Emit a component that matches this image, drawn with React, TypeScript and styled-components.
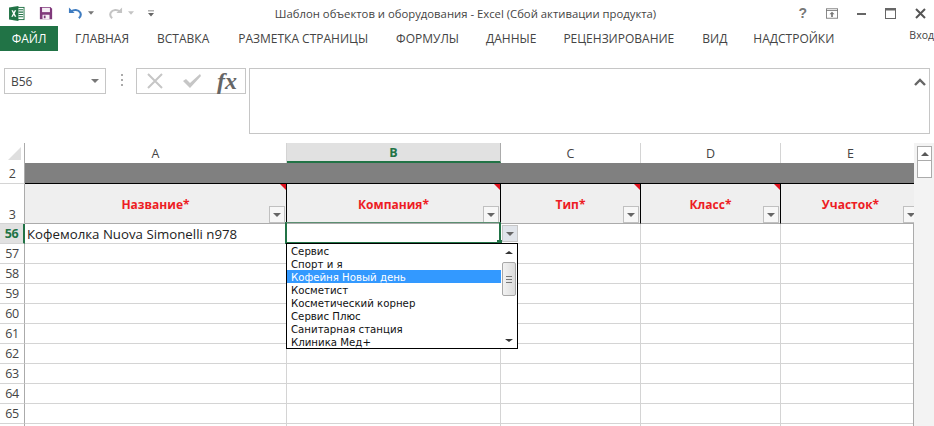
import React from 'react';
import styled, { createGlobalStyle } from 'styled-components';

const GlobalStyle = createGlobalStyle`
  html, body {
    margin: 0;
    padding: 0;
    background: #fff;
    overflow: hidden;
  }
  body {
    font-family: "Open Sans", "Liberation Sans", sans-serif;
    color: #444;
  }
`;

const Page = styled.div`
  width: 934px;
  height: 426px;
  overflow: hidden;
  display: flex;
  flex-direction: column;
`;

const TitleBar = styled.div`
  height: 26px;
  display: grid;
  grid-template-columns: 1fr auto 1fr;
  align-items: center;
`;

const QuickAccess = styled.div`
  display: flex;
  align-items: center;
  padding-left: 9px;
`;

const Glyph = styled.svg<{ $left?: number; $flip?: boolean }>`
  display: block;
  flex: none;
  margin-left: ${(p) => p.$left ?? 0}px;
  ${(p) => (p.$flip ? 'transform: scaleX(-1);' : '')}
`;

const Title = styled.div`
  font-size: 11.3px;
  color: #444;
  white-space: nowrap;
  margin-right: 3px;
`;

const WindowButtons = styled.div`
  display: flex;
  align-items: center;
  justify-content: flex-end;
  gap: 19px;
  padding-right: 8px;
`;

const Help = styled.span`
  font-family: "Liberation Sans", sans-serif;
  font-size: 14px;
  font-weight: 700;
  color: #777;
`;

const TabBar = styled.div`
  height: 25px;
  display: flex;
  align-items: stretch;
  font-size: 12px;
  position: relative;
`;

const FileTab = styled.div`
  width: 58px;
  background: #217346;
  color: #fff;
  display: flex;
  align-items: center;
  justify-content: center;
`;

const Tab = styled.div<{ $left: number }>`
  margin-left: ${(p) => p.$left}px;
  display: flex;
  align-items: center;
  white-space: nowrap;
  color: #444;
`;

const SignIn = styled.div`
  position: absolute;
  right: 0;
  top: 2px;
  font-size: 10.5px;
  color: #444;
`;

const FormulaBar = styled.div`
  margin-top: 17px;
  height: 66px;
  padding-left: 4px;
  display: flex;
  align-items: flex-start;
`;

const NameBox = styled.div`
  box-sizing: border-box;
  width: 102px;
  height: 26px;
  border: 1px solid #c6c6c6;
  display: flex;
  align-items: center;
  justify-content: space-between;
  padding: 0 6px 0 6px;
  font-size: 12px;
  color: #444;
`;

const Caret = styled.span`
  width: 0;
  height: 0;
  border-left: 4px solid transparent;
  border-right: 4px solid transparent;
  border-top: 4px solid #777;
`;

const Grip = styled.div`
  width: 2px;
  height: 14px;
  margin: 6px 13px 0 15px;
  background: repeating-linear-gradient(to bottom, #aaa 0 2px, transparent 2px 5px);
`;

const FxBox = styled.div`
  box-sizing: border-box;
  width: 110px;
  height: 26px;
  border: 1px solid #c6c6c6;
  display: flex;
  align-items: center;
  padding-left: 10px;
`;

const Fx = styled.span`
  font-family: "Liberation Serif", serif;
  font-style: italic;
  font-weight: 700;
  font-size: 24px;
  line-height: 22px;
  color: #666;
  margin-left: 15px;
`;

const FormulaInput = styled.div`
  box-sizing: border-box;
  position: relative;
  margin-left: 3px;
  width: 681px;
  height: 66px;
  border: 1px solid #c6c6c6;
  svg {
    position: absolute;
    top: 9px;
    right: 3px;
  }
`;

const SheetArea = styled.div`
  margin-top: 9px;
  flex: 1;
  display: flex;
  min-height: 0;
`;

const Viewport = styled.div`
  position: relative;
  box-sizing: border-box;
  width: 914px;
  height: 283px;
  overflow: hidden;
  &::after {
    content: '';
    position: absolute;
    top: 80px;
    bottom: 0;
    right: 0;
    width: 1px;
    background: #ababab;
  }
`;

const SheetGrid = styled.div`
  display: grid;
  grid-template-columns: 25px 262px 214px 140px 140px 140px;
  grid-template-rows: 20px 21px 40px repeat(11, 20px);
  width: 921px;
`;

const Corner = styled.div`
  border-right: 1px solid #ababab;
  position: relative;
  &::after {
    content: '';
    position: absolute;
    right: 3px;
    bottom: 3px;
    border-left: 13px solid transparent;
    border-bottom: 13px solid #dfdfdf;
  }
`;

const ColHead = styled.div<{ $active?: boolean }>`
  box-sizing: border-box;
  display: flex;
  align-items: center;
  justify-content: center;
  font-size: 12.5px;
  color: ${(p) => (p.$active ? '#217346' : '#444')};
  font-weight: ${(p) => (p.$active ? 700 : 400)};
  background: ${(p) => (p.$active ? '#e1e1e1' : '#fff')};
  border-right: 1px solid ${(p) => (p.$active ? '#ababab' : '#d4d4d4')};
  border-bottom: ${(p) => (p.$active ? '2px solid #217346' : 'none')};
`;

const RowHead = styled.div<{ $active?: boolean; $bottom?: boolean }>`
  box-sizing: border-box;
  display: flex;
  justify-content: center;
  align-items: ${(p) => (p.$bottom ? 'flex-end' : 'center')};
  font-size: 12.5px;
  letter-spacing: -0.5px;
  color: ${(p) => (p.$active ? '#217346' : '#444')};
  font-weight: ${(p) => (p.$active ? 700 : 400)};
  background: ${(p) => (p.$active ? '#e1e1e1' : '#fff')};
  border-right: ${(p) => (p.$active ? '2px solid #217346' : '1px solid #ababab')};
  border-bottom: 1px solid #d4d4d4;
`;

const GreyBand = styled.div`
  grid-column: 2 / -1;
  background: #808080;
  border-bottom: 1px solid #000;
`;

const HeaderCell = styled.div`
  box-sizing: border-box;
  position: relative;
  background: #efefef;
  border-right: 1px solid #000;
  border-bottom: 1px solid #ababab;
  padding-top: 12px;
  text-align: center;
  font-size: 12px;
  font-weight: 700;
  color: #ed1c24;
  &::after {
    content: '';
    position: absolute;
    top: 0;
    right: 0;
    border-left: 6px solid transparent;
    border-top: 6px solid #e0121f;
  }
`;

const FilterButton = styled.div`
  box-sizing: border-box;
  position: absolute;
  right: 1px;
  bottom: 0;
  width: 16px;
  height: 17px;
  background: #f7f7f7;
  border: 1px solid #c0c0c0;
  display: flex;
  align-items: center;
  justify-content: center;
`;

const SmallCaret = styled.span`
  width: 0;
  height: 0;
  border-left: 4px solid transparent;
  border-right: 4px solid transparent;
  border-top: 4px solid #666;
`;

const Cell = styled.div`
  box-sizing: border-box;
  border-right: 1px solid #d4d4d4;
  border-bottom: 1px solid #d4d4d4;
  padding-left: 2px;
  font-size: 13.25px;
  line-height: 20px;
  color: #222;
  white-space: nowrap;
`;

const SelectedCell = styled.div`
  position: absolute;
  box-sizing: border-box;
  left: 285px;
  top: 79px;
  width: 216px;
  height: 22px;
  border: 2px solid #217346;
  border-top-width: 1px;
  border-top-color: #5c8f72;
  &::after {
    content: '';
    position: absolute;
    right: -3px;
    bottom: -3px;
    width: 5px;
    height: 5px;
    background: #217346;
  }
`;

const ListArrow = styled.div`
  position: absolute;
  box-sizing: border-box;
  left: 502px;
  top: 82px;
  width: 16px;
  height: 17px;
  background: #e0e4ea;
  border: 1px solid #c6c6c6;
  display: flex;
  align-items: center;
  justify-content: center;
`;

const DropList = styled.div`
  position: absolute;
  box-sizing: border-box;
  left: 286px;
  top: 100px;
  width: 232px;
  height: 106px;
  background: #fff;
  border: 1px solid #000;
  display: flex;
  overflow: hidden;
`;

const Options = styled.div`
  flex: 1;
  min-width: 0;
`;

const Option = styled.div<{ $selected?: boolean }>`
  height: 13px;
  line-height: 15px;
  padding-left: 4px;
  font-family: "DejaVu Sans", sans-serif;
  font-size: 10.2px;
  white-space: nowrap;
  color: ${(p) => (p.$selected ? '#fff' : '#111')};
  background: ${(p) => (p.$selected ? '#3399ff' : 'transparent')};
`;

const ListScroll = styled.div`
  width: 16px;
  display: flex;
  flex-direction: column;
  align-items: center;
  background: #fff;
`;

const ScrollArrow = styled.div<{ $down?: boolean }>`
  height: 16px;
  display: flex;
  align-items: center;
  justify-content: center;
  margin-top: ${(p) => (p.$down ? 'auto' : '0')};
  span {
    width: 0;
    height: 0;
    border-left: 4px solid transparent;
    border-right: 4px solid transparent;
    ${(p) => (p.$down ? 'border-top: 3px solid #333;' : 'border-bottom: 3px solid #333;')}
  }
`;

const ListThumb = styled.div`
  box-sizing: border-box;
  margin-top: 2px;
  width: 14px;
  height: 34px;
  background: linear-gradient(to right, #f2f2f2, #dcdcdc);
  border: 1px solid #a8a8a8;
  border-radius: 2px;
  display: flex;
  align-items: center;
  justify-content: center;
  &::after {
    content: '';
    width: 6px;
    height: 7px;
    background: repeating-linear-gradient(to bottom, #777 0 1px, transparent 1px 3px);
  }
`;

const SheetScroll = styled.div`
  flex: 1;
  background: #f3f3f3;
  padding: 3px 0 0 3px;
`;

const ScrollUp = styled.div`
  box-sizing: border-box;
  width: 15px;
  height: 15px;
  background: #fff;
  border: 1px solid #ababab;
  display: flex;
  align-items: center;
  justify-content: center;
  span {
    width: 0;
    height: 0;
    border-left: 4px solid transparent;
    border-right: 4px solid transparent;
    border-bottom: 4px solid #595959;
  }
`;

const ScrollThumb = styled.div`
  box-sizing: border-box;
  width: 15px;
  height: 17px;
  background: #fff;
  border: 1px solid #ababab;
  border-top: none;
`;

const tabs: [string, number][] = [
  ['ГЛАВНАЯ', 17],
  ['ВСТАВКА', 28],
  ['РАЗМЕТКА СТРАНИЦЫ', 29],
  ['ФОРМУЛЫ', 28],
  ['ДАННЫЕ', 27],
  ['РЕЦЕНЗИРОВАНИЕ', 27],
  ['ВИД', 28],
  ['НАДСТРОЙКИ', 26],
];

const columns = ['A', 'B', 'C', 'D', 'E'];
const headers = ['Название*', 'Компания*', 'Тип*', 'Класс*', 'Участок*'];
const rows = [57, 58, 59, 60, 61, 62, 63, 64, 65];
const companies = [
  'Сервис',
  'Спорт и я',
  'Кофейня Новый день',
  'Косметист',
  'Косметический корнер',
  'Сервис Плюс',
  'Санитарная станция',
  'Клиника Мед+',
];

function ExcelIcon() {
  return (
    <Glyph width="16" height="15" viewBox="0 0 17 16">
      <rect x="5" y="1.5" width="11" height="13" fill="#fff" stroke="#217346" />
      <path d="M10 4h5M10 6.5h5M10 9h5M10 11.5h5" stroke="#217346" strokeWidth="1.2" />
      <path d="M0 1.5 10 0v16L0 14.5z" fill="#217346" />
      <path d="M2.6 4.6h1.7L5.1 6.6 6 4.6h1.7L6 8l1.8 3.4H6.1L5.1 9.300 4.100 11.400H2.400L4.200 8z" fill="#fff" />
    </Glyph>
  );
}

function SaveIcon() {
  return (
    <Glyph $left={14} width="14" height="14" viewBox="0 0 16 16">
      <path d="M1 1h12l2 2v12H1z" fill="#80397b" />
      <rect x="3.500" y="2" width="9" height="5" fill="#f5eef5" />
      <rect x="4" y="10" width="8" height="5" fill="#f5eef5" />
      <rect x="5.500" y="11" width="2" height="3" fill="#80397b" />
    </Glyph>
  );
}

function ArrowIcon({ color, flip, left }: { color: string; flip?: boolean; left: number }) {
  return (
    <Glyph $left={left} $flip={flip} width="15" height="14" viewBox="0 0 16 14">
      <path d="M1 1v6h6z" fill={color} />
      <path d="M3.500 5.500C6 3 11 3 13 6.500c1 2 .5 4.500-1.500 6" fill="none" stroke={color} strokeWidth="2.200" />
    </Glyph>
  );
}

function TinyCaret({ color }: { color: string }) {
  return (
    <Glyph $left={5} width="6" height="4" viewBox="0 0 7 4">
      <path d="M0 0h7L3.500 4z" fill={color} />
    </Glyph>
  );
}

function CustomizeIcon() {
  return (
    <Glyph $left={14} width="6" height="7" viewBox="0 0 7 7">
      <path d="M0 0h7v1H0zM0 3h7L3.500 7z" fill="#666" />
    </Glyph>
  );
}

export default function App() {
  return (
    <Page>
      <GlobalStyle />
      <TitleBar>
        <QuickAccess>
          <ExcelIcon />
          <SaveIcon />
          <ArrowIcon color="#3f7cc0" left={15} />
          <TinyCaret color="#777" />
          <ArrowIcon color="#c4c4c4" flip left={14} />
          <TinyCaret color="#c4c4c4" />
          <CustomizeIcon />
        </QuickAccess>
        <Title>Шаблон объектов и оборудования - Excel (Сбой активации продукта)</Title>
        <WindowButtons>
          <Help>?</Help>
          <Glyph width="12" height="11" viewBox="0 0 14 12">
            <rect x=".5" y=".5" width="13" height="11" fill="none" stroke="#777" />
            <path d="M0 2.500h14" stroke="#777" />
            <path d="M7 4 4 7h2v3h2V7h2z" fill="#777" />
          </Glyph>
          <Glyph width="9" height="12" viewBox="0 0 9 12">
            <rect x="0" y="6" width="9" height="2" fill="#666" />
          </Glyph>
          <Glyph width="11" height="11" viewBox="0 0 11 11">
            <rect x=".5" y=".5" width="10" height="10" fill="none" stroke="#666" />
            <rect x="0" y="0" width="11" height="2.500" fill="#666" />
          </Glyph>
          <Glyph width="11" height="11" viewBox="0 0 11 11">
            <path d="M1 1l9 9M10 1l-9 9" stroke="#555" strokeWidth="2" />
          </Glyph>
        </WindowButtons>
      </TitleBar>

      <TabBar>
        <FileTab>ФАЙЛ</FileTab>
        {tabs.map(([label, left]) => (
          <Tab key={label} $left={left}>
            {label}
          </Tab>
        ))}
        <SignIn>Вход</SignIn>
      </TabBar>

      <FormulaBar>
        <NameBox>
          B56
          <Caret />
        </NameBox>
        <Grip />
        <FxBox>
          <Glyph width="16" height="16" viewBox="0 0 16 16">
            <path d="M1 1l14 14M15 1 1 15" stroke="#c6c6c6" strokeWidth="2" />
          </Glyph>
          <Glyph $left={19} width="20" height="16" viewBox="0 0 20 16">
            <path d="M1 8l3-2 4 4L18 1l1 2L8 15z" fill="#c6c6c6" />
          </Glyph>
          <Fx>fx</Fx>
        </FxBox>
        <FormulaInput>
          <svg width="12" height="8" viewBox="0 0 12 8">
            <path d="M1 7l5-5 5 5" fill="none" stroke="#666" strokeWidth="2.400" />
          </svg>
        </FormulaInput>
      </FormulaBar>

      <SheetArea>
        <Viewport>
          <SheetGrid>
            <Corner />
            {columns.map((c) => (
              <ColHead key={c} $active={c === 'B'}>
                {c}
              </ColHead>
            ))}

            <RowHead>2</RowHead>
            <GreyBand />

            <RowHead $bottom>3</RowHead>
            {headers.map((h) => (
              <HeaderCell key={h}>
                {h}
                <FilterButton>
                  <SmallCaret />
                </FilterButton>
              </HeaderCell>
            ))}

            <RowHead $active>56</RowHead>
            <Cell>Кофемолка Nuova Simonelli n978</Cell>
            <Cell />
            <Cell />
            <Cell />
            <Cell />

            {rows.map((r) => (
              <React.Fragment key={r}>
                <RowHead>{r}</RowHead>
                <Cell />
                <Cell />
                <Cell />
                <Cell />
                <Cell />
              </React.Fragment>
            ))}

            <RowHead />
            <Cell />
            <Cell />
            <Cell />
            <Cell />
            <Cell />
          </SheetGrid>

          <SelectedCell />
          <ListArrow>
            <SmallCaret />
          </ListArrow>
          <DropList>
            <Options>
              {companies.map((c) => (
                <Option key={c} $selected={c === 'Кофейня Новый день'}>
                  {c}
                </Option>
              ))}
            </Options>
            <ListScroll>
              <ScrollArrow>
                <span />
              </ScrollArrow>
              <ListThumb />
              <ScrollArrow $down>
                <span />
              </ScrollArrow>
            </ListScroll>
          </DropList>
        </Viewport>
        <SheetScroll>
          <ScrollUp>
            <span />
          </ScrollUp>
          <ScrollThumb />
        </SheetScroll>
      </SheetArea>
    </Page>
  );
}
